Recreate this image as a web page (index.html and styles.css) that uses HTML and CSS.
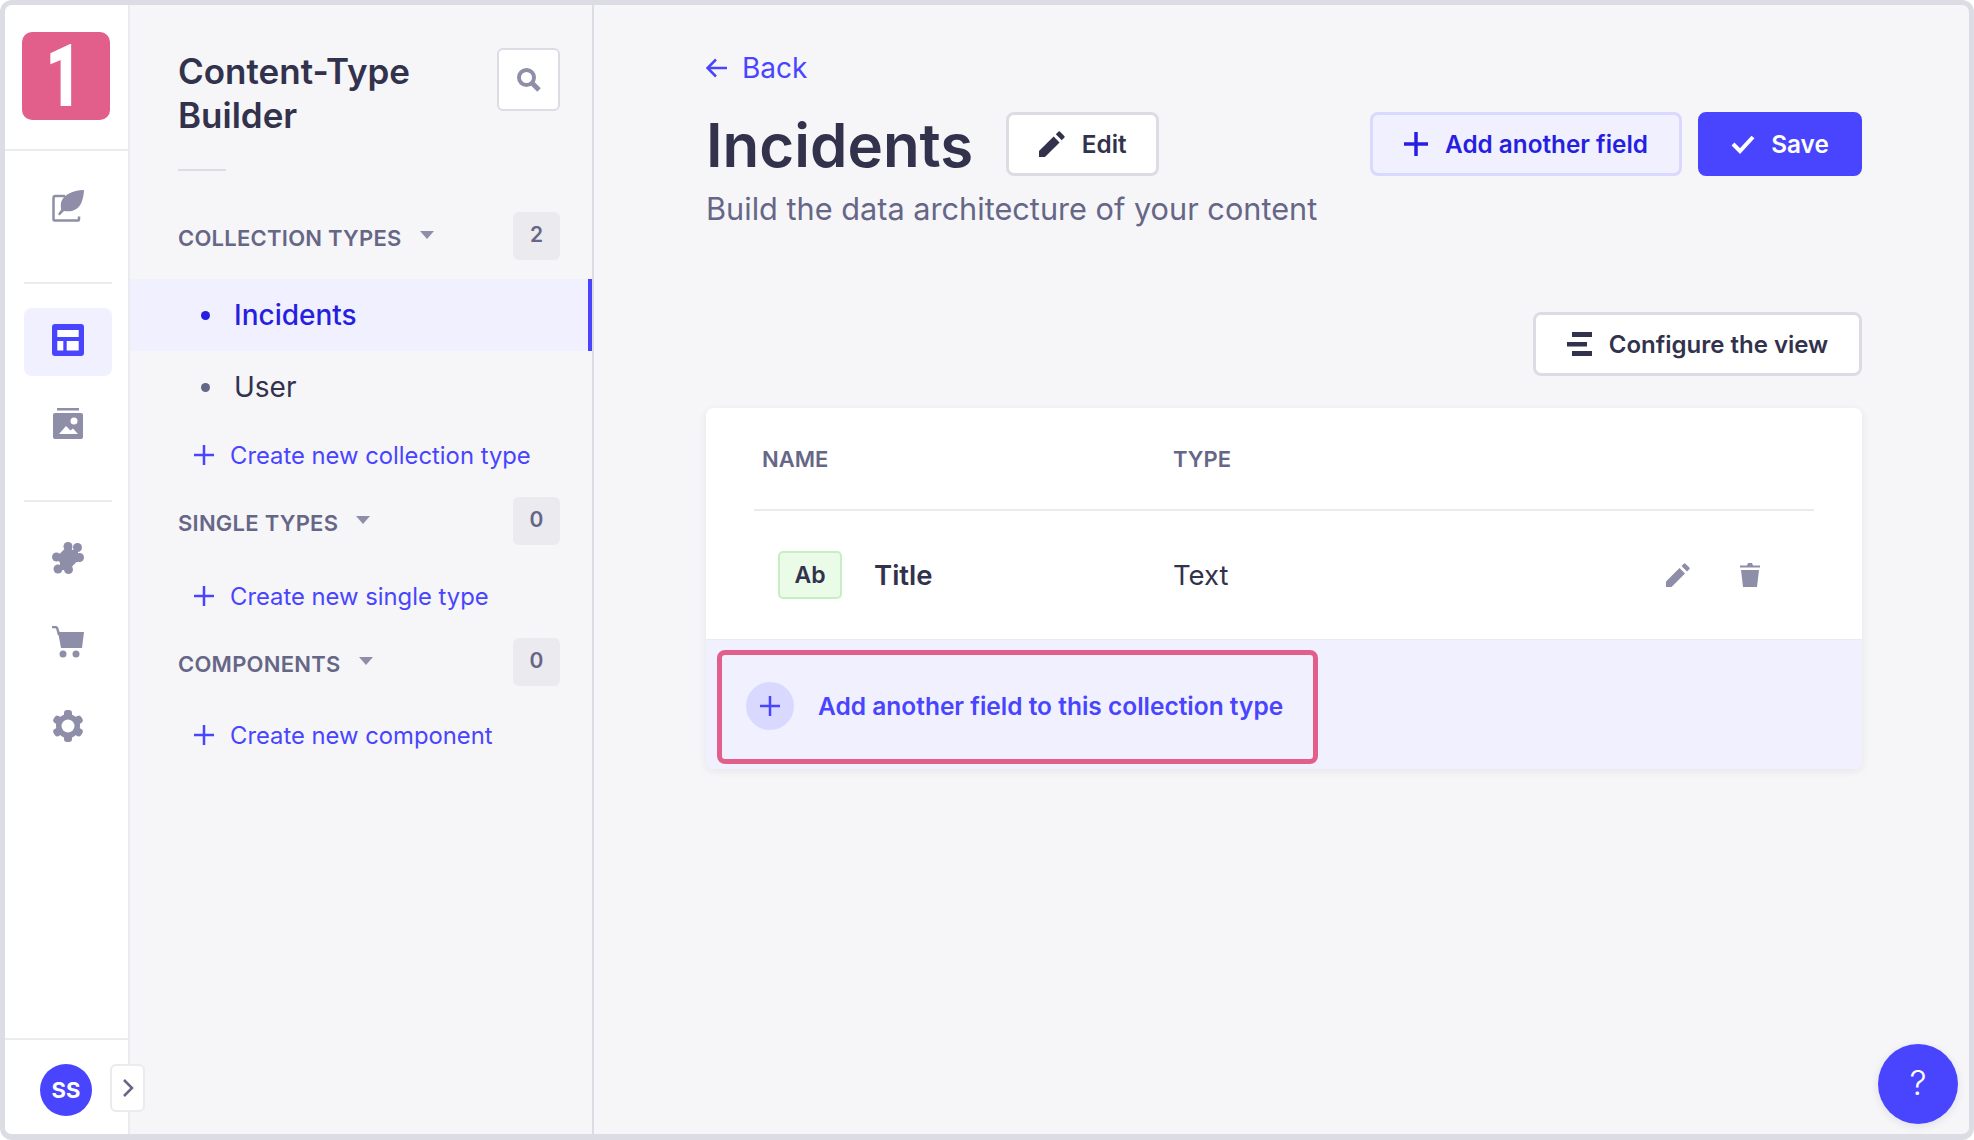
FILE: index.html
```html
<!DOCTYPE html>
<html lang="en">
<head>
    <meta charset="UTF-8" />
    <title>Content-Type Builder</title>
    <link rel="stylesheet" href="styles.css">
</head>
<body>
<div class="frame">

    <nav class="main-nav">
        <div class="logo-box"><div class="logo"><span class="logo-num">1</span></div></div>

        <div class="nav-item nav-first">
            <svg width="32" height="32" viewBox="0 0 32 32"><path class="ico-line" d="M13 6H3.500A2 2 0 0 0 1.500 8v21.500a1 1 0 0 0 1 1H26a1 1 0 0 0 1-1v-3" /><path class="ico-fill" d="M32 0C20 .5 10.500 5 9 13c-.5 3 .2 6.500.2 6.500L6 24l1.500 1.500 4.500-4.500c9 1.500 15.500-2 18-10C31 8 32 3.500 32 0z" /></svg>
        </div>

        <div class="nav-line"></div>
        <div class="nav-group">
            <div class="nav-item active">
                <svg width="32" height="32" viewBox="0 0 32 32"><rect width="32" height="32" rx="3" fill="#4945ff" /><rect x="5.300" y="6" width="21.400" height="7" fill="#fff" /><rect x="5.300" y="17" width="6" height="9.500" fill="#fff" /><rect x="14.700" y="17" width="12" height="9.500" fill="#fff" /></svg>
            </div>
            <div class="nav-item">
                <svg width="30" height="32" viewBox="0 0 30 32"><rect x="4" y="0" width="22" height="2.500" fill="#8e8ea9" /><rect x="0" y="5" width="30" height="26" rx="2" fill="#8e8ea9" /><circle cx="21" cy="13" r="3.500" fill="#fff" /><path d="M6 26l7-8 4.500 4.500 2.500-2 5 5.500z" fill="#fff" /></svg>
            </div>
        </div>

        <div class="nav-line"></div>
        <div class="nav-group nav-group-last">
            <div class="nav-item">
                <svg width="32" height="32" viewBox="0 0 32 32"><g class="ico-fill"><path d="M16 3.500L28.500 16 16 28.500 3.500 16z" /><circle cx="16" cy="4.500" r="4.500" /><circle cx="25.500" cy="5.500" r="4.500" /><circle cx="27.500" cy="15.500" r="4.500" /><circle cx="4.500" cy="15" r="4.500" /><circle cx="6" cy="27" r="4.500" /><circle cx="16.500" cy="27.500" r="4.500" /><path d="M16 8h10v12H16zM8 14h10v14H8z" /></g></svg>
            </div>
            <div class="nav-item">
                <svg width="32" height="32" viewBox="0 0 32 32"><path class="ico-line" d="M0 1h3c1.500 0 2.200 1 2.500 2L7 9" /><path class="ico-fill" d="M6 6h26l-2 16H9z" /><circle class="ico-fill" cx="11" cy="28" r="3.500" /><circle class="ico-fill" cx="24" cy="28" r="3.500" /></svg>
            </div>
            <div class="nav-item">
                <svg width="32" height="32" viewBox="0 0 32 32"><g class="ico-fill"><rect x="12" y="0" width="8" height="32" rx="3" /><rect x="12" y="0" width="8" height="32" rx="3" transform="rotate(60 16 16)" /><rect x="12" y="0" width="8" height="32" rx="3" transform="rotate(120 16 16)" /><circle cx="16" cy="16" r="12" /></g><circle cx="16" cy="16" r="6.500" fill="#fff" /></svg>
            </div>
        </div>

        <div class="nav-footer">
            <div class="avatar">SS</div>
            <button class="collapse-btn">
                <svg width="14" height="20" viewBox="0 0 14 20"><path d="M3 2l8 8-8 8" fill="none" stroke="#666687" stroke-width="2.500" /></svg>
            </button>
        </div>
    </nav>

    <aside class="sub-nav">
        <div class="sub-head">
            <h2>Content-Type Builder</h2>
            <button class="search-btn">
                <svg width="24" height="24" viewBox="0 0 24 24"><circle cx="9.500" cy="9.500" r="7.500" fill="none" stroke="#8e8ea9" stroke-width="4" /><path d="M15 15l7 7" stroke="#8e8ea9" stroke-width="5" /></svg>
            </button>
        </div>
        <div class="sub-hr"></div>

        <div class="type-head">
            <span class="type-label">COLLECTION TYPES</span>
            <span class="caret"></span>
            <span class="count">2</span>
        </div>
        <a class="type-link current"><span class="dot"></span>Incidents</a>
        <a class="type-link"><span class="dot"></span>User</a>
        <a class="add-link">
            <svg width="20" height="20" viewBox="0 0 20 20"><path d="M10 0v20M0 10h20" stroke="#4945ff" stroke-width="2.500" /></svg>
            Create new collection type
        </a>

        <div class="type-head">
            <span class="type-label">SINGLE TYPES</span>
            <span class="caret"></span>
            <span class="count">0</span>
        </div>
        <a class="add-link">
            <svg width="20" height="20" viewBox="0 0 20 20"><path d="M10 0v20M0 10h20" stroke="#4945ff" stroke-width="2.500" /></svg>
            Create new single type
        </a>

        <div class="type-head type-head-tight">
            <span class="type-label">COMPONENTS</span>
            <span class="caret"></span>
            <span class="count">0</span>
        </div>
        <a class="add-link">
            <svg width="20" height="20" viewBox="0 0 20 20"><path d="M10 0v20M0 10h20" stroke="#4945ff" stroke-width="2.500" /></svg>
            Create new component
        </a>
    </aside>

    <main class="content">
        <a class="back-link">
            <svg width="21" height="20" viewBox="0 0 21 20"><path d="M21 10H2M10 1.500L1.500 10l8.500 8.500" fill="none" stroke="#4945ff" stroke-width="2.500" /></svg>
            Back
        </a>

        <div class="title-row">
            <h1>Incidents</h1>
            <button class="btn btn-edit">
                <svg width="26" height="26" viewBox="0 0 24 24"><path d="M0 24v-5.500L13.500 5l5.500 5.500L5.500 24z" fill="#32324d" /><path d="M15.500 3l2.300-2.300a1.200 1.200 0 0 1 1.700 0l3.800 3.800a1.200 1.200 0 0 1 0 1.700L21 8.500z" fill="#32324d" /></svg>
                Edit
            </button>
            <div class="title-actions">
                <button class="btn btn-add">
                    <svg width="24" height="24" viewBox="0 0 24 24"><path d="M12 0v24M0 12h24" stroke="#271fe0" stroke-width="3.500" /></svg>
                    Add another field
                </button>
                <button class="btn btn-save">
                    <svg width="24" height="20" viewBox="0 0 24 20"><path d="M2 10l7 7L22 3" fill="none" stroke="#fff" stroke-width="4" /></svg>
                    Save
                </button>
            </div>
        </div>
        <p class="subtitle">Build the data architecture of your content</p>

        <div class="toolbar">
            <button class="btn btn-config">
                <svg width="25" height="24" viewBox="0 0 25 24"><rect x="5" width="20" height="5" fill="#32324d" /><rect y="10" width="20" height="4.500" fill="#32324d" /><rect x="5" y="19" width="20" height="5" fill="#32324d" /></svg>
                Configure the view
            </button>
        </div>

        <section class="card">
            <div class="card-body">
                <div class="card-cols card-head">
                    <span class="col-name">NAME</span>
                    <span>TYPE</span>
                </div>
                <div class="card-cols field-row">
                    <div class="col-name field-name">
                        <span class="field-tag">Ab</span>
                        <span class="field-title">Title</span>
                    </div>
                    <span class="field-type">Text</span>
                    <div class="field-tools">
                        <svg width="24" height="24" viewBox="0 0 24 24"><path d="M0 24v-5.500L13.500 5l5.500 5.500L5.500 24z" fill="#8e8ea9" /><path d="M15.500 3l2.300-2.300a1.200 1.200 0 0 1 1.700 0l3.800 3.800a1.200 1.200 0 0 1 0 1.700L21 8.500z" fill="#8e8ea9" /></svg>
                        <svg width="20" height="24" viewBox="0 0 20 24"><path d="M0 2.500h7L8 0h4l1 2.500h7v2H0zM1 7h18l-2 17H3z" fill="#8e8ea9" /></svg>
                    </div>
                </div>
            </div>
            <div class="card-foot">
                <a class="add-field">
                    <span class="add-circle">
                        <svg width="20" height="20" viewBox="0 0 20 20"><path d="M10 0v20M0 10h20" stroke="#4945ff" stroke-width="2.500" /></svg>
                    </span>
                    Add another field to this collection type
                </a>
            </div>
        </section>

        <button class="help-btn">?</button>
    </main>
</div>
</body>
</html>
```

FILE: styles.css
```css
* {
    box-sizing: border-box;
    font-family: 'Inter', sans-serif;
}

body {
    margin: 0;
    background: #fff;
}

a, button {
    cursor: pointer;
}

button {
    padding: 0;
    font-size: inherit;
}

.frame {
    display: flex;
    width: 1974px;
    height: 1140px;
    overflow: hidden;
    border: solid #dcdce4;
    border-width: 5px 5px 6px 5px;
    border-radius: 12px;
    background: #f6f6f9;
}

/* left icon rail */
.main-nav {
    position: relative;
    z-index: 1;
    display: flex;
    flex-direction: column;
    flex: 0 0 125px;
    min-width: 0;
    background: #fff;
    border-right: 2px solid #eaeaef;
}

.logo-box {
    height: 146px;
    padding: 27px 0 0 17px;
    border-bottom: 2px solid #eaeaef;
}

.logo {
    display: flex;
    align-items: center;
    justify-content: center;
    width: 88px;
    height: 88px;
    padding-right: 5px;
    border-radius: 10px;
    background: #e25f8c;
    color: #fff;
    font-size: 88px;
    line-height: 88px;
}

.logo-num {
    display: inline-block;
    font-family: 'Roboto', sans-serif;
    font-weight: 900;
    transform: scaleX(0.72);
}

.nav-item {
    display: flex;
    align-items: center;
    justify-content: center;
    width: 88px;
    height: 68px;
    margin-left: 19px;
    border-radius: 8px;
}

.nav-item.active {
    padding-bottom: 4px;
    background: #f0f0ff;
}

.nav-first {
    margin-top: 21px;
}

.nav-line {
    width: 88px;
    height: 2px;
    margin: 42px 0 0 19px;
    background: #eaeaef;
}

.nav-group {
    display: flex;
    flex-direction: column;
    gap: 14px;
    margin-top: 24px;
}

.nav-group-last {
    gap: 16px;
    margin-top: 22px;
}

.ico-fill {
    fill: #8e8ea9;
}

.ico-line {
    fill: none;
    stroke: #8e8ea9;
    stroke-width: 2.5;
}

.nav-footer {
    display: flex;
    align-items: flex-start;
    gap: 18px;
    height: 96px;
    margin-top: auto;
    padding: 24px 0 0 35px;
    border-top: 2px solid #eaeaef;
}

.avatar {
    flex: 0 0 52px;
    height: 52px;
    border-radius: 50%;
    background: #4945ff;
    color: #fff;
    font-size: 22px;
    font-weight: 700;
    line-height: 52px;
    text-align: center;
}

.collapse-btn {
    display: flex;
    align-items: center;
    justify-content: center;
    flex: 0 0 35px;
    height: 48px;
    border: 2px solid #eaeaef;
    border-radius: 6px;
    background: #fff;
}

/* content-type list */
.sub-nav {
    flex: 0 0 464px;
    border-right: 2px solid #dcdce4;
}

.sub-head {
    display: flex;
    justify-content: space-between;
    align-items: flex-start;
    padding: 43px 32px 0 48px;
}

h2 {
    width: 290px;
    margin: 1px 0 0;
    color: #32324d;
    font-size: 35px;
    font-weight: 600;
    line-height: 44px;
}

.search-btn {
    display: flex;
    align-items: center;
    justify-content: center;
    width: 63px;
    height: 63px;
    border: 2px solid #dcdce4;
    border-radius: 6px;
    background: #fff;
}

.sub-hr {
    width: 48px;
    height: 2px;
    margin: 32px 0 41px 48px;
    background: #dcdce4;
}

.type-head {
    display: flex;
    align-items: center;
    height: 48px;
    margin: 10px 0 19px;
    padding: 0 32px 0 48px;
}

.type-head-tight {
    margin-bottom: 17px;
}

.type-label {
    padding-top: 4px;
    color: #666687;
    font-size: 22px;
    font-weight: 600;
    letter-spacing: 0.25px;
}

.caret {
    width: 0;
    height: 0;
    margin: 0 0 2px 18px;
    border: solid transparent;
    border-width: 8px 7.5px 0;
    border-top-color: #8e8ea9;
}

.count {
    width: 47px;
    height: 48px;
    margin-left: auto;
    border-radius: 6px;
    background: #eaeaef;
    color: #666687;
    font-size: 21px;
    font-weight: 600;
    line-height: 46px;
    text-align: center;
}

.type-link {
    display: flex;
    align-items: center;
    height: 72px;
    padding-left: 71px;
    color: #32324d;
    font-size: 28px;
}

.type-link .dot {
    width: 9px;
    height: 9px;
    margin-right: 24px;
    border-radius: 50%;
    background: #666687;
}

.type-link.current {
    border-right: 4px solid #4945ff;
    background: #f0f0ff;
    color: #271fe0;
    font-weight: 500;
}

.type-link.current .dot {
    background: #271fe0;
}

.add-link {
    display: flex;
    align-items: center;
    gap: 16px;
    height: 64px;
    padding-left: 64px;
    color: #4945ff;
    font-size: 23.8px;
}

/* main column */
.content {
    flex: 1;
    padding: 45px 107px 0 112px;
}

.back-link {
    display: flex;
    align-items: center;
    gap: 15px;
    height: 36px;
    margin-bottom: 26px;
    color: #4945ff;
    font-size: 28px;
}

.title-row {
    display: flex;
    align-items: center;
    height: 64px;
}

h1 {
    margin: 2px 33px 0 0;
    color: #32324d;
    font-size: 60px;
    font-weight: 600;
    line-height: 64px;
}

.btn {
    display: flex;
    align-items: center;
    justify-content: center;
    height: 64px;
    border: 3px solid #dcdce4;
    border-radius: 8px;
    background: #fff;
    color: #32324d;
    font-size: 24.3px;
    font-weight: 600;
}

.btn-edit {
    gap: 17px;
    width: 153px;
}

.title-actions {
    display: flex;
    gap: 16px;
    margin-left: auto;
}

.btn-add {
    gap: 17px;
    width: 312px;
    border-color: #d9d8ff;
    background: #f0f0ff;
    color: #271fe0;
}

.btn-save {
    gap: 16px;
    width: 164px;
    border-color: #4945ff;
    background: #4945ff;
    color: #fff;
}

.subtitle {
    margin: 13px 0 0;
    color: #666687;
    font-size: 30.7px;
    line-height: 40px;
}

.toolbar {
    display: flex;
    justify-content: flex-end;
    margin: 83px 0 32px;
}

.btn-config {
    gap: 17px;
    width: 329px;
    font-size: 24px;
}

.card {
    border-radius: 8px;
    background: #fff;
    box-shadow: 0 2px 8px rgba(33, 33, 52, 0.08);
}

.card-body {
    padding: 0 48px;
}

.card-cols {
    display: flex;
    align-items: center;
}

.card-head {
    height: 103px;
    padding-left: 8px;
    border-bottom: 2px solid #eaeaef;
    color: #666687;
    font-size: 22px;
    font-weight: 600;
}

.col-name {
    width: 411px;
}

.field-row {
    height: 128px;
    padding-left: 24px;
    color: #32324d;
    font-size: 27.5px;
}

.field-row .col-name {
    width: 395px;
}

.field-name {
    display: flex;
    align-items: center;
    gap: 32px;
}

.field-tag {
    width: 64px;
    height: 48px;
    border: 2px solid #c6f0c2;
    border-radius: 5px;
    background: #eafbe7;
    font-size: 23px;
    font-weight: 600;
    line-height: 44px;
    text-align: center;
}

.field-title {
    font-weight: 600;
}

.field-tools {
    display: flex;
    align-items: center;
    gap: 50px;
    margin: 0 54px 0 auto;
}

.card-foot {
    height: 130px;
    padding: 10px 0 6px 11px;
    border-top: 1px solid #eaeaef;
    border-radius: 0 0 8px 8px;
    background: #f0f0ff;
}

.add-field {
    display: flex;
    align-items: center;
    gap: 24px;
    width: 601px;
    height: 114px;
    padding: 0 0 2px 24px;
    border: 5px solid #e25f8c;
    border-radius: 8px;
    color: #4945ff;
    font-size: 24.5px;
    font-weight: 600;
}

.add-circle {
    display: flex;
    align-items: center;
    justify-content: center;
    flex: 0 0 48px;
    height: 48px;
    border-radius: 50%;
    background: #d9d8ff;
}

.help-btn {
    position: absolute;
    left: 1878px;
    top: 1044px;
    width: 80px;
    height: 80px;
    padding-bottom: 4px;
    border: 0;
    border-radius: 50%;
    background: #4945ff;
    color: #fff;
    font-size: 34px;
    font-weight: 300;
    box-shadow: 0 2px 8px rgba(33, 33, 52, 0.1);
}
```
